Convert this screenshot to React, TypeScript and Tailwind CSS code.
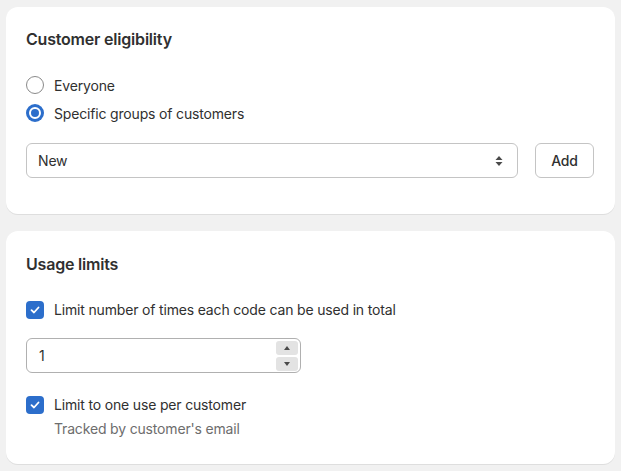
import { useState } from "react";

function Radio({ checked, label, onClick }: { checked: boolean; label: string; onClick: () => void }) {
  return (
    <label onClick={onClick} className="flex h-[28px] cursor-pointer items-center gap-[10px]">
      {checked ? (
        <span className="grid size-[18px] place-items-center rounded-full bg-[#2c6ecb]">
          <span className="size-[12px] rounded-full border-[2.5px] border-white bg-[#2c6ecb]" />
        </span>
      ) : (
        <span className="size-[18px] rounded-full border-[1.5px] border-[#8a8a8a] bg-white" />
      )}
      <span className="text-[14px] tracking-[-0.17px] text-[#303030]">{label}</span>
    </label>
  );
}

function Check({ label }: { label: string }) {
  return (
    <div className="flex items-center gap-[10px]">
      <span className="grid size-[18px] place-items-center rounded-[4px] bg-[#2c6ecb]">
        <svg width="12" height="12" viewBox="0 0 12 12" fill="none">
          <path d="M2.5 6.2 L5 8.5 L9.5 3.5" stroke="white" strokeWidth="1.8" strokeLinecap="round" strokeLinejoin="round" />
        </svg>
      </span>
      <span className="text-[14px] tracking-[-0.17px] text-[#303030]">{label}</span>
    </div>
  );
}

export default function App() {
  const [who, setWho] = useState("groups");
  return (
    <div className="min-h-[471px] bg-[#f1f1f1] px-[6px] pt-[7px] font-['Inter',sans-serif] text-[#303030]">
      <section className="rounded-[12px] bg-white px-[20px] pb-[36px] pt-[22px] shadow-[0_1px_0_rgba(0,0,0,0.08)]">
        <h2 className="text-[16px] font-semibold leading-[20px] tracking-[-0.2px]">Customer eligibility</h2>
        <div className="mt-[22px] flex flex-col">
          <Radio checked={who === "all"} label="Everyone" onClick={() => setWho("all")} />
          <Radio checked={who === "groups"} label="Specific groups of customers" onClick={() => setWho("groups")} />
        </div>
        <div className="mt-[16px] flex gap-[17px] pr-[1px]">
          <div className="flex h-[35px] flex-1 items-center justify-between rounded-[6px] border border-[#c4c4c4] pl-[11px] pr-[13px]">
            <span className="text-[14px] tracking-[-0.17px]">New</span>
            <svg width="10" height="14" viewBox="0 0 10 14">
              <path d="M5 2 L8.5 6 H1.5 Z" fill="#4a4a4a" />
              <path d="M5 12 L8.5 8 H1.5 Z" fill="#4a4a4a" />
            </svg>
          </div>
          <button className="h-[35px] w-[59px] rounded-[6px] border border-[#c4c4c4] bg-white text-[14px] font-medium tracking-[-0.17px]">Add</button>
        </div>
      </section>
      <section className="mt-[17px] rounded-[12px] bg-white px-[20px] pb-[25px] pt-[23px] shadow-[0_1px_0_rgba(0,0,0,0.08)]">
        <h2 className="text-[16px] font-semibold leading-[20px] tracking-[-0.2px]">Usage limits</h2>
        <div className="mt-[25px]">
          <Check label="Limit number of times each code can be used in total" />
        </div>
        <div className="mt-[18px] flex h-[35px] w-[275px] items-center justify-between rounded-[6px] border border-[#b0b0b0] pl-[12px] pr-[2px]">
          <span className="text-[14px]">1</span>
          <div className="flex flex-col gap-[2px]">
            <span className="grid h-[14px] w-[22px] place-items-center rounded-[3px] bg-[#e3e3e3]">
              <svg width="6" height="4" viewBox="0 0 6 4"><path d="M3 0 L6 4 H0 Z" fill="#4a4a4a" /></svg>
            </span>
            <span className="grid h-[14px] w-[22px] place-items-center rounded-[3px] bg-[#e3e3e3]">
              <svg width="6" height="4" viewBox="0 0 6 4"><path d="M3 4 L6 0 H0 Z" fill="#4a4a4a" /></svg>
            </span>
          </div>
        </div>
        <div className="mt-[21px]">
          <Check label="Limit to one use per customer" />
        </div>
        <p className="mt-[3px] pl-[28px] text-[14px] tracking-[-0.17px] text-[#6d6d6d]">Tracked by customer's email</p>
      </section>
    </div>
  );
}
